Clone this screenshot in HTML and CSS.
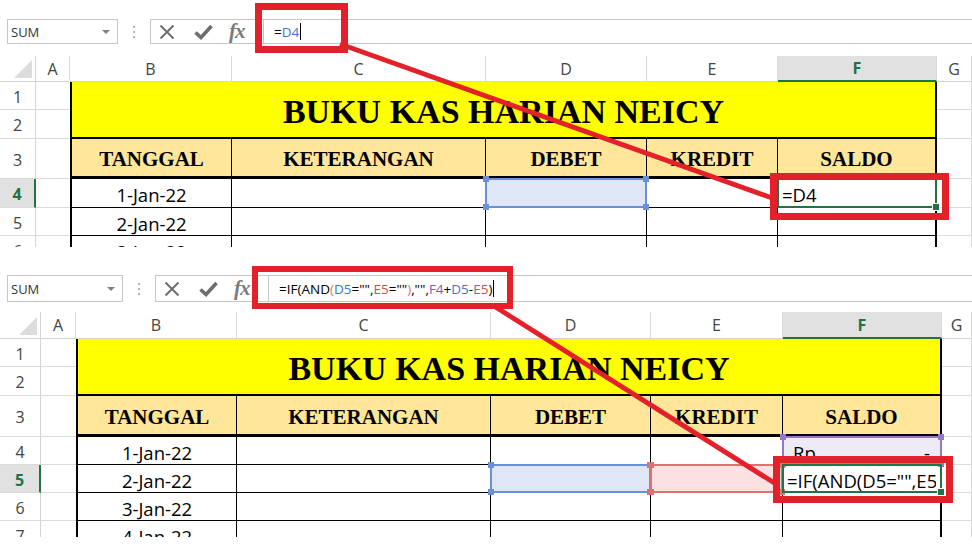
FILE: index.html
```html
<!DOCTYPE html>
<html>
<head>
<meta charset="utf-8">
<title>Buku Kas Harian</title>
<link rel="stylesheet" href="styles.css">
</head>
<body>
<div class="panel p1">
  <div class="fbar">
    <div class="namebox"><span>SUM</span><span class="dd"></span></div>
    <div class="grip"><svg width="4" height="14" viewBox="0 0 4 14"><circle cx="2" cy="2" r="1.1"/><circle cx="2" cy="7" r="1.1"/><circle cx="2" cy="12" r="1.1"/></svg></div>
    <div class="fbox">
      <div class="btns">
        <svg class="ic-x" width="16" height="16" viewBox="0 0 16 16"><path d="M1.5 1.5 L14.5 14.5 M14.5 1.5 L1.5 14.5"/></svg>
        <svg class="ic-ok" width="19" height="16" viewBox="0 0 19 16"><path d="M1.5 8.5 L7 13.5 L17.5 2"/></svg>
        <span class="fx">fx</span>
      </div>
      <div class="finput"><span>=</span><span class="rb">D4</span><span class="caret"></span></div>
    </div>
  </div>
  <div class="sheet">
    <div class="corner"><span class="tri"></span></div>
    <div class="ch">A</div><div class="ch">B</div><div class="ch">C</div><div class="ch">D</div><div class="ch">E</div><div class="ch on">F</div><div class="ch">G</div>

    <div class="rh">1</div><div class="g ga"></div><div class="title">BUKU KAS HARIAN NEICY</div><div class="g"></div>
    <div class="rh">2</div><div class="g ga"></div><div class="g"></div>

    <div class="rh">3</div><div class="g ga"></div>
    <div class="hd tb">TANGGAL</div><div class="hd">KETERANGAN</div><div class="hd">DEBET</div><div class="hd">KREDIT</div><div class="hd tf">SALDO</div>
    <div class="g"></div>

    <div class="rh on">4</div><div class="g ga"></div>
    <div class="t tb dt">1-Jan-22</div><div class="t"></div>
    <div class="t fill-b"><div class="hl hb"><i class="k tl"></i><i class="k tr"></i><i class="k bl"></i><i class="k br"></i></div></div>
    <div class="t"></div>
    <div class="t tf"><span class="txt">=D4</span><div class="hl ha"><i class="fh"></i></div></div>
    <div class="g"></div>

    <div class="rh">5</div><div class="g ga"></div>
    <div class="t tb dt">2-Jan-22</div><div class="t"></div><div class="t"></div><div class="t"></div><div class="t tf"></div>
    <div class="g"></div>

    <div class="rh">6</div><div class="g ga"></div>
    <div class="t tb dt">3-Jan-22</div><div class="t"></div><div class="t"></div><div class="t"></div><div class="t tf"></div>
    <div class="g"></div>
  </div>
</div>

<div class="panel p2">
  <div class="fbar">
    <div class="namebox"><span>SUM</span><span class="dd"></span></div>
    <div class="grip"><svg width="4" height="14" viewBox="0 0 4 14"><circle cx="2" cy="2" r="1.1"/><circle cx="2" cy="7" r="1.1"/><circle cx="2" cy="12" r="1.1"/></svg></div>
    <div class="fbox">
      <div class="btns">
        <svg class="ic-x" width="16" height="16" viewBox="0 0 16 16"><path d="M1.5 1.5 L14.5 14.5 M14.5 1.5 L1.5 14.5"/></svg>
        <svg class="ic-ok" width="19" height="16" viewBox="0 0 19 16"><path d="M1.5 8.5 L7 13.5 L17.5 2"/></svg>
        <span class="fx">fx</span>
      </div>
      <div class="finput"><span>=IF(AND</span><span class="rp">(</span><span class="rb">D5</span><span>="",</span><span class="rr">E5</span><span>=""</span><span class="rp">)</span><span>,"",</span><span class="ru">F4</span><span>+</span><span class="rb">D5</span><span>-</span><span class="rr">E5</span><span>)</span><span class="caret"></span></div>
    </div>
  </div>
  <div class="sheet">
    <div class="corner"><span class="tri"></span></div>
    <div class="ch">A</div><div class="ch">B</div><div class="ch">C</div><div class="ch">D</div><div class="ch">E</div><div class="ch on">F</div><div class="ch">G</div>

    <div class="rh">1</div><div class="g ga"></div><div class="title">BUKU KAS HARIAN NEICY</div><div class="g"></div>
    <div class="rh">2</div><div class="g ga"></div><div class="g"></div>

    <div class="rh">3</div><div class="g ga"></div>
    <div class="hd tb">TANGGAL</div><div class="hd">KETERANGAN</div><div class="hd">DEBET</div><div class="hd">KREDIT</div><div class="hd tf">SALDO</div>
    <div class="g"></div>

    <div class="rh">4</div><div class="g ga"></div>
    <div class="t tb dt">1-Jan-22</div><div class="t"></div><div class="t"></div><div class="t"></div>
    <div class="t tf fill-p acc"><span>Rp</span><span>-</span><div class="hl hp"><i class="k tl"></i><i class="k tr"></i><i class="k bl"></i><i class="k br"></i></div></div>
    <div class="g"></div>

    <div class="rh on">5</div><div class="g ga"></div>
    <div class="t tb dt">2-Jan-22</div><div class="t"></div>
    <div class="t fill-b"><div class="hl hb"><i class="k tl"></i><i class="k tr"></i><i class="k bl"></i><i class="k br"></i></div></div>
    <div class="t fill-r"><div class="hl hr"><i class="k tl"></i><i class="k tr"></i><i class="k bl"></i><i class="k br"></i></div></div>
    <div class="t tf"><span class="txt">=IF(AND(D5="",E5=""),"",F4+D5-E5)</span><div class="hl ha"><i class="fh"></i></div></div>
    <div class="g"></div>

    <div class="rh">6</div><div class="g ga"></div>
    <div class="t tb dt">3-Jan-22</div><div class="t"></div><div class="t"></div><div class="t"></div><div class="t tf"></div>
    <div class="g"></div>

    <div class="rh">7</div><div class="g ga"></div>
    <div class="t tb dt">4-Jan-22</div><div class="t"></div><div class="t"></div><div class="t"></div><div class="t tf"></div>
    <div class="g"></div>
  </div>
</div>

<svg class="annot" width="972" height="547" viewBox="0 0 972 547">
  <g fill="none" stroke="#E3212A">
    <rect x="258.5" y="6.5" width="86" height="43" stroke-width="7"/>
    <rect x="773.5" y="176.5" width="172" height="40" stroke-width="7"/>
    <line x1="340" y1="44" x2="775" y2="199" stroke-width="5"/>
    <rect x="255" y="269" width="255" height="37" stroke-width="6"/>
    <rect x="776.5" y="459.5" width="173" height="40" stroke-width="7"/>
    <line x1="494" y1="306" x2="776" y2="484" stroke-width="5"/>
  </g>
</svg>
</body>
</html>
```

FILE: styles.css
```css
* { box-sizing: border-box; margin: 0; padding: 0; }
html, body { width: 972px; height: 547px; background: #fff; overflow: hidden; }
body { position: relative; font-family: "Open Sans", "Noto Sans", sans-serif; color: #000; }

.panel { position: relative; overflow: hidden; }
.p1 { height: 247px; padding-top: 19px; }
.p2 { height: 290px; padding-top: 28px; }

/* formula bar */
.fbar { display: flex; height: 25px; margin-bottom: 12px; }
.p2 .fbar { height: 27px; margin-bottom: 10px; }
.namebox {
  margin-left: 7px; width: 111px; border: 1px solid #C6C6C6;
  display: flex; align-items: center; justify-content: space-between;
  padding: 0 7px 0 3px; font-size: 13px; color: #333;
}
.p2 .namebox { width: 116px; }
.dd { width: 0; height: 0; border-left: 4px solid transparent; border-right: 4px solid transparent; border-top: 4px solid #808080; }
.grip { width: 32px; display: flex; align-items: center; justify-content: center; }
.grip svg { fill: #A0A0A0; }
.fbox { flex: 1; display: flex; border: 1px solid #C6C6C6; border-right: none; }
.btns { width: 112px; display: flex; align-items: center; padding-left: 8px; }
.ic-x { stroke: #6E6E6E; stroke-width: 2; fill: none; }
.ic-ok { stroke: #6E6E6E; stroke-width: 3.6; fill: none; margin-left: 19px; }
.fx {
  font-family: "Liberation Serif", "DejaVu Serif", serif; font-style: italic; font-weight: bold;
  font-size: 21px; color: #7A7A7A; margin-left: 16px; letter-spacing: -1px; line-height: 1;
}
.finput {
  flex: 1; border-left: 1px solid #C6C6C6; display: flex; align-items: center;
  padding-left: 10px; font-size: 13.5px; color: #000; white-space: pre;
}
.rb { color: #3F74D2; }
.rr { color: #CF4F4F; }
.ru { color: #8359B8; }
.rp { color: #E07A66; }
.caret { display: inline-block; width: 1px; height: 17px; background: #000; margin-left: 1px; }

/* sheet grid */
.sheet { display: grid; }
.p1 .sheet {
  grid-template-columns: 36px 34px 162px 254px 161px 131px 159px 35px;
  grid-template-rows: 26px 28px 29px 40px 29px 28px 28px;
}
.p2 .sheet {
  grid-template-columns: 41px 35px 161px 254px 160px 132px 159px 30px;
  grid-template-rows: 27px 28px 29px 41px 28px 28px 28px 28px;
}

.corner { position: relative; border-right: 1px solid #D4D4D4; border-bottom: 1px solid #D4D4D4; }
.tri {
  position: absolute; right: 3px; bottom: 3px; width: 18px; height: 18px;
  background: #DCDCDC; clip-path: polygon(100% 0, 100% 100%, 0 100%);
}
.ch {
  display: flex; align-items: center; justify-content: center;
  font-size: 16px; color: #444; border-right: 1px solid #D9D9D9; border-bottom: 1px solid #D4D4D4;
}
.ch.on { background: #E1E1E1; color: #217346; font-weight: bold; border-bottom: 2px solid #217346; }
.rh {
  display: flex; align-items: center; justify-content: center; padding-top: 2px;
  font-size: 16px; color: #444; border-right: 1px solid #D4D4D4; border-bottom: 1px solid #DADADA;
}
.rh.on { background: #E1E1E1; color: #217346; font-weight: bold; border-right: 2px solid #217346; }

.g { border-right: 1px solid #DADADA; border-bottom: 1px solid #DADADA; }
.g.ga { border-right: none; }

.title {
  grid-column: 3 / span 5; grid-row: span 2;
  background: #FFFF00; border-left: 2px solid #000; border-right: 2px solid #000; border-bottom: 2px solid #000;
  display: flex; align-items: center; justify-content: center; padding-top: 4px;
  font-family: "Liberation Serif", "Times New Roman", serif; font-weight: bold; font-size: 34px;
}
.hd {
  background: #FFE699; border-right: 1px solid #000; border-bottom: 3px solid #000;
  display: flex; align-items: center; justify-content: center; padding-top: 4px;
  font-family: "Liberation Serif", "Times New Roman", serif; font-weight: bold; font-size: 21px;
}
.t {
  position: relative; border-right: 1px solid #000; border-bottom: 1px solid #000;
  display: flex; align-items: center; padding: 3px 4px 0 4px; font-size: 18.5px; min-width: 0;
}
.tb { border-left: 2px solid #000; }
.tf { border-right: 2px solid #000; }
.dt { justify-content: center; }
.acc { justify-content: space-between; padding: 3px 10px 0 10px; }
.txt { display: block; min-width: 0; overflow: hidden; white-space: nowrap; }

.fill-b { background: #DFE6F7; }
.fill-r { background: #FBE2E2; }
.fill-p { background: #EEEAF6; }

.hl { position: absolute; top: -1px; left: -1px; right: -1px; bottom: -1px; border: 2px solid; z-index: 1; }
.tf .hl { right: -2px; }
.hb { border-color: #6A90DA; }
.hr { border-color: #E07171; }
.hp { border-color: #9677C9; }
.ha { border-color: #217346; z-index: 2; }
.k { position: absolute; width: 6px; height: 6px; z-index: 3; }
.hb .k { background: #6A90DA; }
.hr .k { background: #E07171; }
.hp .k { background: #9677C9; }
.k.tl { left: -4px; top: -4px; }
.k.tr { right: -4px; top: -4px; }
.k.bl { left: -4px; bottom: -4px; }
.k.br { right: -4px; bottom: -4px; }
.fh { position: absolute; right: -4px; bottom: -4px; width: 6px; height: 6px; background: #217346; outline: 1px solid #fff; z-index: 3; }

.annot { position: absolute; left: 0; top: 0; z-index: 10; pointer-events: none; }
```
